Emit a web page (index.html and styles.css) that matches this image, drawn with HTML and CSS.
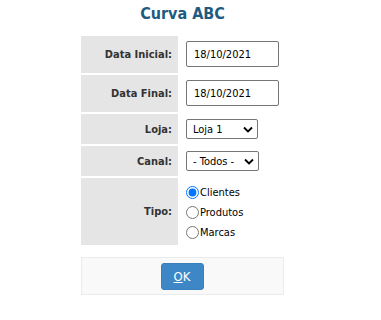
FILE: index.html
```html
<!DOCTYPE html>
<html lang="pt">
<head>
<meta charset="utf-8">
<title>Curva ABC</title>
<link rel="stylesheet" href="styles.css">
</head>
<body>
<div class="page">
  <h1 class="title">Curva ABC</h1>
  <table class="form-table">
    <tr class="row-input">
      <th class="label">Data Inicial:</th>
      <td class="value"><input class="text-input" type="text" value="18/10/2021"></td>
    </tr>
    <tr class="row-input">
      <th class="label">Data Final:</th>
      <td class="value"><input class="text-input" type="text" value="18/10/2021"></td>
    </tr>
    <tr>
      <th class="label">Loja:</th>
      <td class="value">
        <span class="select-wrap select-loja">
          <select class="select"><option>Loja 1</option></select>
          <svg class="chevron" width="10" height="7" viewBox="0 0 10 7"><path d="M1 1.5 L5 5.5 L9 1.5" fill="none" stroke="#000" stroke-width="1.8"/></svg>
        </span>
      </td>
    </tr>
    <tr>
      <th class="label">Canal:</th>
      <td class="value">
        <span class="select-wrap select-canal">
          <select class="select"><option>- Todos -</option></select>
          <svg class="chevron" width="10" height="7" viewBox="0 0 10 7"><path d="M1 1.5 L5 5.5 L9 1.5" fill="none" stroke="#000" stroke-width="1.8"/></svg>
        </span>
      </td>
    </tr>
    <tr>
      <th class="label">Tipo:</th>
      <td class="value radios">
        <label class="radio-line"><input type="radio" name="tipo" checked><span>Clientes</span></label>
        <label class="radio-line"><input type="radio" name="tipo"><span>Produtos</span></label>
        <label class="radio-line"><input type="radio" name="tipo"><span>Marcas</span></label>
      </td>
    </tr>
  </table>
  <div class="actions">
    <button class="btn" type="button" accesskey="o"><u>O</u>K</button>
  </div>
</div>
</body>
</html>
```

FILE: styles.css
```css
html, body {
  margin: 0;
  padding: 0;
  background: #ffffff;
}
body {
  font-family: "DejaVu Sans Condensed", "DejaVu Sans", sans-serif;
  font-size: 11px;
  color: #000;
}
.page {
  width: 365px;
  display: flex;
  flex-direction: column;
  align-items: center;
}
.title {
  margin: 4px 0 0 0;
  height: 30px;
  font-size: 16px;
  line-height: 20px;
  font-weight: bold;
  color: #1d5b82;
}
.form-table {
  border-collapse: separate;
  border-spacing: 2px;
  width: 207px;
}
.label {
  width: 87px;
  background: #e5e5e5;
  text-align: right;
  padding: 0 6px 0 4px;
  font-size: 11px;
  font-weight: bold;
  color: #333;
  vertical-align: middle;
}
.value {
  padding: 5px 0 5px 6px;
  text-align: left;
  vertical-align: middle;
}
.row-input .value {
  padding: 5px 0 6px 6px;
}
.text-input {
  box-sizing: border-box;
  width: 93px;
  height: 26px;
  margin: 0;
  padding: 0 7px;
  border: 1px solid #767676;
  border-radius: 2px;
  font-family: inherit;
  font-size: 11px;
  color: #000;
  display: block;
}
.select-wrap {
  position: relative;
  display: block;
}
.select {
  -webkit-appearance: none;
  appearance: none;
  box-sizing: border-box;
  height: 20px;
  margin: 0;
  padding: 0 0 0 6px;
  border: 1px solid #767676;
  border-radius: 2px;
  background: #fff;
  font-family: inherit;
  font-size: 11px;
  color: #000;
  display: block;
}
.select-loja .select { width: 72px; }
.select-canal .select { width: 73px; }
.chevron {
  position: absolute;
  top: 7px;
  pointer-events: none;
}
.select-loja .chevron { left: 57px; }
.select-canal .chevron { left: 58px; }
.radios {
  padding: 4px 0 3px 0;
}
.radio-line {
  display: flex;
  align-items: center;
  height: 20px;
}
.radio-line input {
  width: 13px;
  height: 13px;
  margin: 0 1px 0 6px;
}
.actions {
  box-sizing: border-box;
  width: 203px;
  margin-top: 10px;
  padding: 5px 0 4px;
  background: #f9f9f9;
  border: 1px solid #ebebeb;
  display: flex;
  justify-content: center;
}
.btn {
  box-sizing: border-box;
  width: 43px;
  height: 27px;
  margin: 0 0 0 -1px;
  padding: 0;
  background: #3e87c6;
  border: 1px solid #3a7ebb;
  border-radius: 3px;
  color: #fff;
  font-family: inherit;
  font-size: 13px;
}
```
